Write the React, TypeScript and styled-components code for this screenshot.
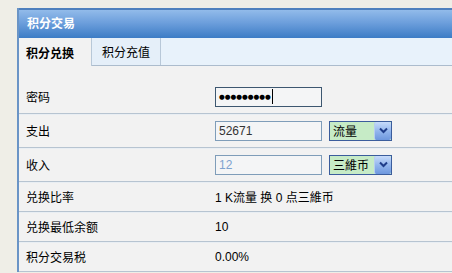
import React, { useState } from 'react';
import styled, { createGlobalStyle, css } from 'styled-components';

const GlobalStyle = createGlobalStyle`
  body {
    margin: 0;
    background-color: #efeee7;
    overflow: hidden;
    font-family: 'Liberation Sans', 'Noto Sans CJK SC', sans-serif;
    font-size: 12px;
    color: #000000;
  }
`;

const Panel = styled.section`
  width: 435px;
  margin: 8px 0 0 17px;
  border-left: 2px solid #6a94c6;
  background-color: #f2f2f2;
`;

const Header = styled.h2`
  margin: 0;
  height: 28px;
  line-height: 28px;
  padding-left: 8px;
  border-top: 2px solid #4f80bd;
  background: linear-gradient(#92bbea, #6d9fdc 45%, #3c7cc5);
  color: #ffffff;
  font-size: 12px;
  font-weight: 700;
`;

const TabBar = styled.div`
  display: flex;
  height: 27px;
  border-bottom: 1px solid #acbccd;
  background-color: #e8f2fb;
`;

const Tab = styled.button<{ selected?: boolean }>`
  height: 27px;
  padding: 0 10px 0 10px;
  border: none;
  border-right: 1px solid #b8c8d8;
  background-color: #e5eff9;
  font-family: inherit;
  font-size: 12px;
  color: #000000;
  cursor: pointer;
  ${props =>
    props.selected &&
    css`
      width: 73px;
      height: 28px;
      margin-bottom: -1px;
      padding-left: 7px;
      text-align: left;
      background-color: #f2f2f2;
      font-weight: 700;
    `}
`;

const Form = styled.form`
  padding-top: 14px;
`;

const Row = styled.div<{ tall?: boolean }>`
  display: grid;
  grid-template-columns: 189px 1fr;
  align-items: center;
  height: ${props => (props.tall ? '33px' : '29px')};
  padding-left: 7px;
  border-bottom: 1px solid #b7c4d1;
  box-shadow: 0 1px 0 #e9eef3;
`;

const Label = styled.label`
  color: #000000;
`;

const Field = styled.div`
  display: flex;
  align-items: center;
  gap: 7px;
`;

const TextInput = styled.input<{ muted?: boolean }>`
  box-sizing: border-box;
  width: 107px;
  height: 20px;
  padding: 0 3px;
  border: 1px solid #7f9db9;
  background-color: #f4f5f6;
  font-family: 'Liberation Sans', sans-serif;
  font-size: 12px;
  color: ${props => (props.muted ? '#7ea3cf' : '#333333')};
  outline: none;
`;

const PasswordBox = styled.div`
  box-sizing: border-box;
  display: flex;
  align-items: center;
  width: 107px;
  height: 20px;
  padding: 0 2px 0 3px;
  border: 1px solid #3d5770;
  background-color: #f4f5f6;
  font-family: 'DejaVu Sans', sans-serif;
  font-size: 6.6px;
  color: #000000;
`;

const Caret = styled.span`
  width: 1px;
  height: 15px;
  margin-left: 1px;
  background-color: #000000;
`;

const SelectWrap = styled.div`
  position: relative;
  box-sizing: border-box;
  width: 63px;
  height: 20px;
  border: 1px solid #3b5d9c;
  background-color: #c6ebc6;
`;

const NativeSelect = styled.select`
  appearance: none;
  width: 100%;
  height: 100%;
  padding: 0 0 0 3px;
  border: none;
  background: transparent;
  font-family: 'Noto Sans CJK SC', sans-serif;
  font-size: 12px;
  color: #000000;
  outline: none;
`;

const Arrow = styled.span`
  position: absolute;
  top: 0;
  right: 0;
  bottom: 0;
  display: flex;
  align-items: center;
  justify-content: center;
  width: 16px;
  border-left: 1px solid #b6cdf0;
  border-radius: 2px;
  background: linear-gradient(#c7dbfa, #8fb3ec 55%, #6e97de);
  pointer-events: none;
`;

const Value = styled.span`
  color: #000000;
`;

const Dropdown = ({ value, options }: { value: string; options: string[] }) => (
  <SelectWrap>
    <NativeSelect defaultValue={value}>
      {options.map(o => (
        <option key={o}>{o}</option>
      ))}
    </NativeSelect>
    <Arrow>
      <svg width='9' height='7' viewBox='0 0 9 7'>
        <path d='M1 1.5 L4.5 5 L8 1.5' fill='none' stroke='#1f3d8a' strokeWidth='2' />
      </svg>
    </Arrow>
  </SelectWrap>
);

const App = () => {
  const [tab, setTab] = useState('exchange');

  return (
    <>
      <GlobalStyle />
      <Panel>
        <Header>积分交易</Header>
        <TabBar>
          <Tab selected={tab === 'exchange'} onClick={() => setTab('exchange')}>
            积分兑换
          </Tab>
          <Tab selected={tab === 'recharge'} onClick={() => setTab('recharge')}>
            积分充值
          </Tab>
        </TabBar>
        <Form>
          <Row tall>
            <Label>密码</Label>
            <Field>
              <PasswordBox>
                ●●●●●●●●●
                <Caret />
              </PasswordBox>
            </Field>
          </Row>
          <Row tall>
            <Label htmlFor='pay'>支出</Label>
            <Field>
              <TextInput id='pay' defaultValue='52671' />
              <Dropdown value='流量' options={['流量', '三維币']} />
            </Field>
          </Row>
          <Row tall>
            <Label htmlFor='income'>收入</Label>
            <Field>
              <TextInput id='income' muted defaultValue='12' />
              <Dropdown value='三維币' options={['三維币', '流量']} />
            </Field>
          </Row>
          <Row>
            <Label>兑换比率</Label>
            <Value>1 K流量 换 0 点三維币</Value>
          </Row>
          <Row>
            <Label>兑换最低余额</Label>
            <Value>10</Value>
          </Row>
          <Row>
            <Label>积分交易税</Label>
            <Value>0.00%</Value>
          </Row>
        </Form>
      </Panel>
    </>
  );
};

export default App;
